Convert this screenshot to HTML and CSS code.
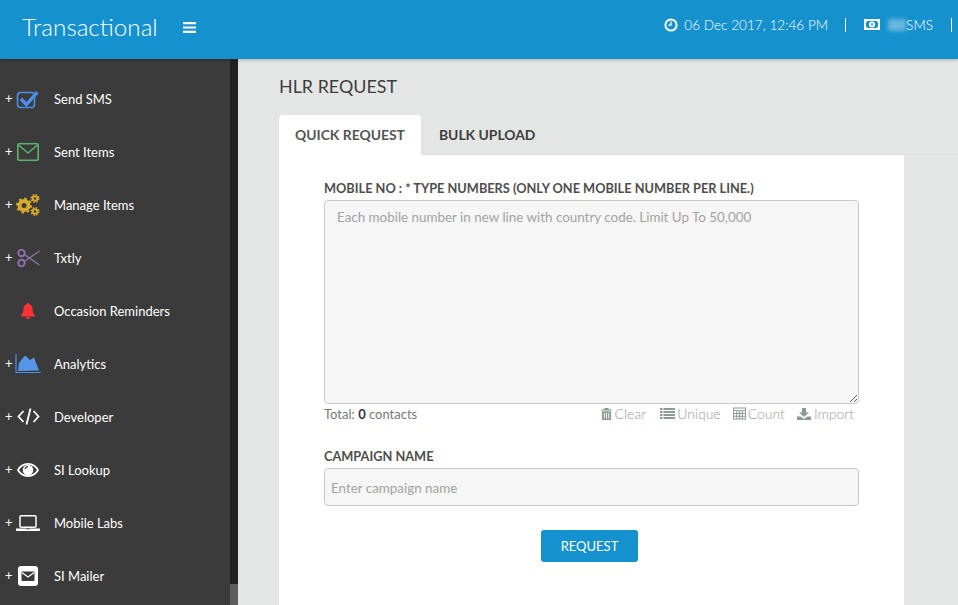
FILE: index.html
```html
<!DOCTYPE html>
<html lang="en">
<head>
<meta charset="utf-8">
<title>HLR Request</title>
<link rel="stylesheet" href="styles.css">
</head>
<body>
<header class="topbar">
  <div class="brand">Transactional</div>
  <svg class="burger" viewBox="0 0 13 11" width="13" height="11"><path d="M0 0h13v2.2H0zM0 4.4h13v2.2H0zM0 8.8h13V11H0z" fill="#fff"/></svg>
  <div class="top-right">
    <svg class="ic-clock" viewBox="0 0 14 14" width="14" height="14"><circle cx="7" cy="7" r="5.6" fill="none" stroke="#fff" stroke-width="2"/><path d="M7.6 3.6v4.2H4.4V6.4h1.9V3.6z" fill="#fff"/></svg>
    <span class="date">06 Dec 2017, 12:46 PM</span>
    <span class="sep"></span>
    <svg class="ic-money" viewBox="0 0 16 11" width="16" height="11"><path fill-rule="evenodd" d="M0 0h16v11H0zM2 2v7h12V2z" fill="#fff"/><circle cx="8" cy="5.5" r="3" fill="#fff"/><rect x="7.4" y="4" width="1.2" height="3" fill="#1591ce"/><path d="M2 2h1.500L2 3.500zM14 2v1.500L12.500 2zM2 9V7.500L3.500 9zM14 9h-1.500L14 7.500z" fill="#fff"/></svg>
    <span class="blur-count"></span>
    <span class="sms">SMS</span>
    <span class="sep sep-last"></span>
  </div>
</header>
<div class="layout">
  <aside class="sidebar">
    <nav class="nav">
      <a class="nav-item"><span class="plus">+</span><span class="nav-ic"><svg viewBox="0 0 24 20" width="24" height="20"><rect x="1.5" y="3.5" width="17" height="15" rx="3" fill="none" stroke="#4c8fe8" stroke-width="1.6"/><path d="M6 8.500l4.500 4.500 9.500-11 2.500 2.500-12 13.500-7-7z" fill="#4c8fe8"/></svg></span><span class="nav-label">Send SMS</span></a>
      <a class="nav-item"><span class="plus">+</span><span class="nav-ic"><svg viewBox="0 0 22 18" width="22" height="18"><rect x=".8" y=".8" width="20.4" height="16.4" rx="1" fill="none" stroke="#5cb270" stroke-width="1.6"/><path d="M1.500 2l9.500 8 9.500-8" fill="none" stroke="#5cb270" stroke-width="1.6"/></svg></span><span class="nav-label">Sent Items</span></a>
      <a class="nav-item"><span class="plus">+</span><span class="nav-ic"><svg viewBox="0 0 24 22" width="24" height="22"><g fill="none" stroke="#d9a92c"><circle cx="8" cy="11.500" r="4.500" stroke-width="4"/><circle cx="8" cy="11.500" r="7" stroke-width="2" stroke-dasharray="2.500 3"/><circle cx="19" cy="4.500" r="2.300" stroke-width="2"/><circle cx="19" cy="4.500" r="3.800" stroke-width="1.500" stroke-dasharray="1.500 1.500"/><circle cx="19" cy="17.500" r="2.300" stroke-width="2"/><circle cx="19" cy="17.500" r="3.800" stroke-width="1.500" stroke-dasharray="1.500 1.500"/></g></svg></span><span class="nav-label">Manage Items</span></a>
      <a class="nav-item"><span class="plus">+</span><span class="nav-ic"><svg viewBox="0 0 23 18" width="23" height="18"><g fill="none" stroke="#8d70a8" stroke-width="2"><circle cx="4.500" cy="4" r="3.200"/><circle cx="4.500" cy="14" r="3.200"/><path d="M7.300 5.500L22.500 16M7.300 12.500L22.500 2" stroke-width="1.400"/></g></svg></span><span class="nav-label">Txtly</span></a>
      <a class="nav-item"><span class="plus plus-empty"></span><span class="nav-ic"><svg viewBox="0 0 14 16" width="14" height="16"><path d="M7 0a1.200 1.200 0 0 1 1.200 1.300C10.500 1.800 11.500 3.600 11.500 6c0 3.500 1 5 2.500 6.500v1H0v-1C1.500 11 2.500 9.500 2.500 6c0-2.400 1-4.200 3.300-4.700A1.200 1.200 0 0 1 7 0zM5 14.300h4a2 2 0 0 1-4 0z" fill="#f33"/></svg></span><span class="nav-label">Occasion Reminders</span></a>
      <a class="nav-item"><span class="plus">+</span><span class="nav-ic"><svg viewBox="0 0 26 20" width="26" height="20"><path d="M1 0v18.500h25" fill="none" stroke="#4c8fe8" stroke-width="1.200"/><path d="M3 17L4 9l6-7.500 5 4.500 4-2.500 5 13z" fill="#5595ec"/></svg></span><span class="nav-label">Analytics</span></a>
      <a class="nav-item"><span class="plus">+</span><span class="nav-ic"><svg viewBox="0 0 23 17" width="23" height="17"><path d="M6.500 3L1.500 8.500l5 5.500M16.500 3l5 5.500-5 5.500M13.500 0.500L9.500 16.500" fill="none" stroke="#fff" stroke-width="1.800"/></svg></span><span class="nav-label">Developer</span></a>
      <a class="nav-item"><span class="plus">+</span><span class="nav-ic"><svg viewBox="0 0 22 14" width="22" height="14"><path fill-rule="evenodd" d="M11 0c5 0 9 3 11 7-2 4-6 7-11 7S2 11 0 7c2-4 6-7 11-7zM11 1.800C7.500 1.800 4 3.800 2 7c2 3.200 5.500 5.200 9 5.200s7-2 9-5.200c-2-3.200-5.500-5.200-9-5.200z" fill="#fff"/><circle cx="11" cy="7" r="5.300" fill="#fff"/><path d="M7.500 6a3.500 3.500 0 0 1 3.500-3v1.200A2.300 2.300 0 0 0 8.700 6z" fill="#3b3b3b"/></svg></span><span class="nav-label">SI Lookup</span></a>
      <a class="nav-item"><span class="plus">+</span><span class="nav-ic"><svg viewBox="0 0 24 16" width="24" height="16"><rect x="4" y=".8" width="16" height="11.400" rx="1" fill="none" stroke="#fff" stroke-width="1.500"/><path d="M0 13.500h24v1.500a1 1 0 0 1-1 1H1a1 1 0 0 1-1-1z" fill="#fff"/><rect x="10.500" y="13.500" width="3" height=".8" fill="#3b3b3b"/></svg></span><span class="nav-label">Mobile Labs</span></a>
      <a class="nav-item"><span class="plus">+</span><span class="nav-ic"><svg viewBox="0 0 20 20" width="20" height="20"><rect width="20" height="20" rx="3" fill="#fff"/><rect x="3.500" y="5.500" width="13" height="9.500" rx="1" fill="#3b3b3b"/><path d="M3.800 6.500L10 11l6.200-4.500" fill="none" stroke="#fff" stroke-width="1.200"/></svg></span><span class="nav-label">SI Mailer</span></a>
    </nav>
    <div class="scrolltrack"><div class="scrollthumb"></div></div>
  </aside>
  <main class="main">
    <h1 class="title">HLR REQUEST</h1>
    <div class="tabs">
      <div class="tab tab-active">QUICK REQUEST</div>
      <div class="tab">BULK UPLOAD</div>
    </div>
    <section class="panel">
      <label class="label">MOBILE NO : * TYPE NUMBERS (ONLY ONE MOBILE NUMBER PER LINE.)</label>
      <textarea class="numbers" placeholder="Each mobile number in new line with country code. Limit Up To 50,000"></textarea>
      <div class="tools">
        <div class="total">Total: <b>0</b> contacts</div>
        <div class="actions">
          <span class="action action-first"><svg viewBox="0 0 12 13" width="11" height="12"><path fill-rule="evenodd" d="M4 0h4l1 1.500h3v1.200H0V1.500h3zM1 3.500h10V12a1 1 0 0 1-1 1H2a1 1 0 0 1-1-1zM3 5v6.500h1V5zM5.500 5v6.500h1V5zM8 5v6.500h1V5z" fill="#8a9a90"/></svg>Clear</span>
          <span class="action action-tight"><svg viewBox="0 0 15 11" width="15" height="11"><path d="M0 0h2.500v2H0zM3.500 0H15v2H3.500zM0 3h2.500v2H0zM3.500 3H15v2H3.500zM0 6h2.500v2H0zM3.500 6H15v2H3.500zM0 9h2.500v2H0zM3.500 9H15v2H3.500z" fill="#8a9a90"/></svg>Unique</span>
          <span class="action action-tight"><svg viewBox="0 0 14 13" width="13" height="13"><path fill-rule="evenodd" d="M0 0h14v13H0zM1 1v2h12V1zM1 4v2h2.500V4zM4.500 4v2h2V4zM7.500 4v2h2V4zM10.500 4v2H13V4zM1 7v2h2.500V7zM4.500 7v2h2V7zM7.500 7v2h2V7zM10.500 7v2H13V7zM1 10v2h2.500v-2zM4.500 10v2h2v-2zM7.500 10v2h2v-2zM10.500 10v2H13v-2z" fill="#8a9a90"/></svg>Count</span>
          <span class="action"><svg viewBox="0 0 14 12" width="14" height="12"><path d="M5 0h4v4.500h3L7 9 2 4.500h3zM0 8.500h3.500L7 11l3.500-2.500H14V12H0z" fill="#8a9a90"/></svg>Import</span>
        </div>
      </div>
      <label class="label label-campaign">CAMPAIGN NAME</label>
      <input class="campaign" type="text" placeholder="Enter campaign name">
      <div class="submit-row"><button class="btn" type="button">REQUEST</button></div>
    </section>
  </main>
</div>
</body>
</html>
```
FILE: styles.css
```css
* { box-sizing: border-box; }
html, body { margin: 0; height: 100%; }
body { width: 958px; height: 605px; overflow: hidden; font-family: Lato, "Open Sans", sans-serif; background: #e4e6e5; color: #444; }

.topbar { height: 59px; background: #1591ce; display: flex; align-items: center; color: #fff; box-shadow: 0 1px 3px rgba(0,0,0,.25); position: relative; z-index: 2; }
.brand { font-weight: 300; font-size: 24.2px; margin: -6px 0 0 22px; width: 161px; }
.burger { margin-top: -4px; }
.top-right { margin-left: auto; display: flex; align-items: center; font-weight: 300; font-size: 13.6px; margin-top: -10px; padding-right: 6px; }
.date { margin-left: 6px; }
.sep { width: 1px; height: 14px; background: #fff; margin-left: 17px; }
.ic-money { margin-left: 18px; }
.blur-count { width: 18px; height: 12px; margin-left: 8px; background: rgba(255,255,255,.35); filter: blur(2px); }
.sep-last { margin-left: 18px; }

.layout { display: flex; height: 546px; }
.sidebar { width: 238px; flex: none; background: #3b3b3b; display: flex; overflow: hidden; }
.nav { width: 230px; padding-top: 13px; }
.nav-item { display: flex; align-items: center; height: 53px; color: #fff; font-size: 13px; }
.plus { width: 15px; padding-left: 5px; font-size: 13px; margin-top: -2px; flex: none; }
.plus-empty { visibility: hidden; }
.nav-ic { width: 26px; height: 24px; display: flex; align-items: center; justify-content: center; flex: none; }
.nav-label { margin-left: 13px; }
.scrolltrack { width: 8px; background: #222; display: flex; align-items: flex-end; }
.scrollthumb { width: 8px; height: 21px; background: #5d5d5d; }

.main { flex: 1; padding-left: 41px; min-width: 0; }
.title { margin: 0; padding-top: 16px; height: 56px; font-size: 17.9px; font-weight: 400; color: #3d3d3d; }
.tabs { display: flex; height: 40px; border-bottom: 1px solid #dfe1e0; }
.tab { padding: 11px 16px 0; height: 40px; font-size: 13.9px; font-weight: 700; color: #3d3d3d; }
.tab-active { background: #fff; color: #555; border-radius: 4px 4px 0 0; }
.tab + .tab { padding-left: 18px; }
.panel { width: 625px; height: 451px; background: #fff; padding: 25px 45px 0; }
.label { display: block; font-size: 12.75px; font-weight: 700; color: #4d4d4d; line-height: 16px; }
.numbers { display: block; width: 535px; height: 204px; margin-top: 4px; background: #f6f6f6; border: 1px solid #c9c9c9; border-radius: 4px; padding: 8px 12px; font: 400 13.4px Lato, sans-serif; color: #444; }
.numbers::placeholder, .campaign::placeholder { color: #a3a3a3; opacity: 1; }
.tools { display: flex; justify-content: space-between; width: 535px; height: 20px; align-items: center; font-size: 13px; color: #777; padding-right: 5px; }
.total b { color: #333; }
.actions { display: flex; gap: 12px; color: #9a9a9a; font-weight: 300; font-size: 14px; }
.action { display: flex; align-items: center; gap: 3px; margin-top: -1px; }
.action-first { margin-right: 2px; }
.action-tight { gap: 2px; }
.label-campaign { margin-top: 24px; }
.campaign { display: block; width: 535px; height: 38px; margin-top: 4px; background: #f6f6f6; border: 1px solid #c9c9c9; border-radius: 4px; padding: 1px 6px 0; font: 400 13.4px Lato, sans-serif; }
.submit-row { display: flex; justify-content: center; margin-top: 24px; width: 531px; }
.btn { width: 97px; height: 32px; border: 0; border-radius: 3px; background: #1591ce; color: #fff; font: 400 13px Lato, sans-serif; }
```
